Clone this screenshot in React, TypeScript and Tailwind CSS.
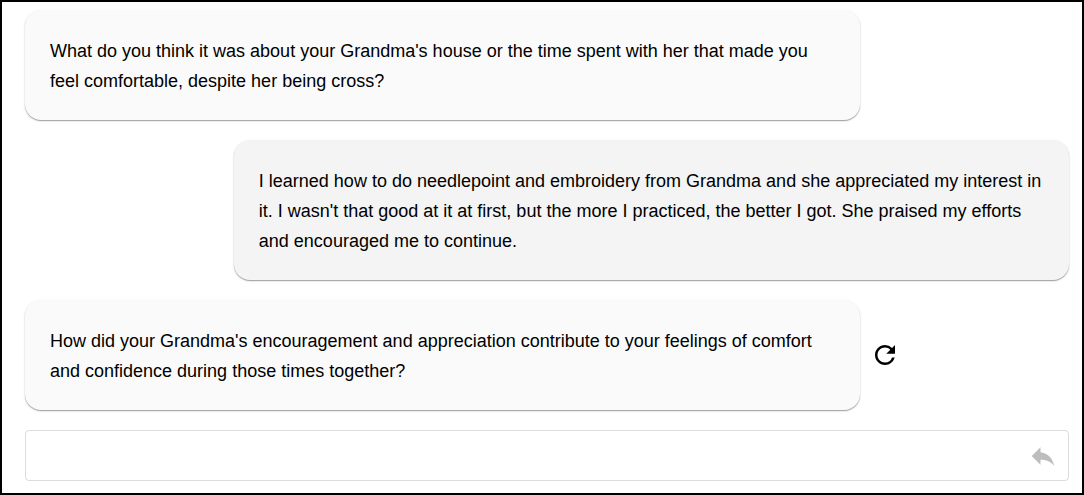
import React, { useState } from "react";
import { MdRefresh, MdReply } from "react-icons/md";

interface Message {
  from: "guide" | "user";
  text: string;
}

const messages: Array<Message> = [
  {
    from: "guide",
    text: "What do you think it was about your Grandma's house or the time spent with her that made you feel comfortable, despite her being cross?",
  },
  {
    from: "user",
    text: "I learned how to do needlepoint and embroidery from Grandma and she appreciated my interest in it. I wasn't that good at it at first, but the more I practiced, the better I got. She praised my efforts and encouraged me to continue.",
  },
  {
    from: "guide",
    text: "How did your Grandma's encouragement and appreciation contribute to your feelings of comfort and confidence during those times together?",
  },
];

const App: React.FC = () => {
  const [draft, setDraft] = useState("");

  return (
    <main className="min-h-screen border-2 border-black bg-white pt-2 pr-[13px] pb-3 pl-[23px] font-['Liberation_Sans',Arial,sans-serif] text-lg/[30px] text-black">
      <div className="flex flex-col gap-5">
        {messages.map((message, index) => (
          <div
            key={index}
            className={
              message.from === "user"
                ? "flex items-center justify-end"
                : "flex items-center gap-[10px]"
            }
          >
            <p
              className={
                message.from === "user"
                  ? "w-4/5 rounded-2xl bg-[#f4f4f4] px-[25px] pt-[26px] pb-6 shadow-[0_1px_1px_rgba(0,0,0,0.32),0_1px_3px_rgba(0,0,0,0.1)]"
                  : "w-4/5 rounded-2xl bg-[#fafafa] px-[25px] pt-[26px] pb-6 shadow-[0_1px_1px_rgba(0,0,0,0.32),0_1px_3px_rgba(0,0,0,0.1)]"
              }
            >
              {message.text}
            </p>
            {/* only the latest question can be asked again */}
            {index === messages.length - 1 && (
              <button type="button" aria-label="Ask another question">
                <MdRefresh size={30} />
              </button>
            )}
          </div>
        ))}

        <form
          className="flex items-center rounded-sm border border-[#dcdcdc] pr-[10px]"
          onSubmit={(e) => e.preventDefault()}
        >
          <input
            type="text"
            aria-label="Your answer"
            value={draft}
            onChange={(e) => setDraft(e.target.value)}
            className="h-[49px] min-w-0 flex-1 px-3 outline-none"
          />
          <button type="submit" aria-label="Send" className="text-[#bdbdbd]">
            <MdReply size={30} />
          </button>
        </form>
      </div>
    </main>
  );
};

export default App;
